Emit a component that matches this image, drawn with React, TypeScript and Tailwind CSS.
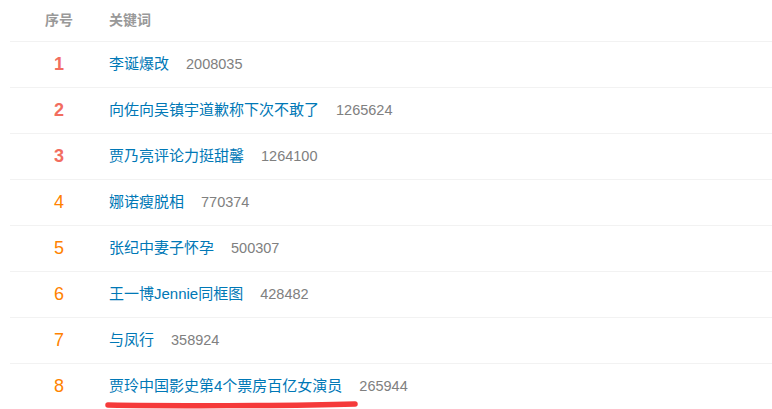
const rows = [
  { rank: 1, word: '李诞爆改', count: '2008035' },
  { rank: 2, word: '向佐向吴镇宇道歉称下次不敢了', count: '1265624' },
  { rank: 3, word: '贾乃亮评论力挺甜馨', count: '1264100' },
  { rank: 4, word: '娜诺瘦脱相', count: '770374' },
  { rank: 5, word: '张纪中妻子怀孕', count: '500307' },
  { rank: 6, word: '王一博Jennie同框图', count: '428482' },
  { rank: 7, word: '与凤行', count: '358924' },
  { rank: 8, word: '贾玲中国影史第4个票房百亿女演员', count: '265944', marked: true },
]

export default function App() {
  return (
    <div className="w-[772px] h-[409px] overflow-hidden bg-white font-['Liberation_Sans','Noto_Sans_CJK_SC',sans-serif]">
      <div className="ml-[10px]">
        <div className="flex items-center h-[41px] text-[14px] font-bold text-[#999]">
          <div className="w-[98px] text-center">序号</div>
          <div className="pl-px">关键词</div>
        </div>
        {rows.map(r => (
          <div key={r.rank} className="flex items-center h-[46px] border-t border-[#f2f2f2]">
            <div className={`w-[98px] text-center text-[18px] ${r.rank <= 3 ? 'font-bold text-[#f26d5f]' : 'text-[#ff8200]'}`}>
              {r.rank}
            </div>
            <div className="relative pl-px text-[15px] text-[#0078b6]">
              {r.word}
              {r.marked ? (
                <svg className="absolute left-[-3px] top-[24px]" width="254" height="12" viewBox="0 0 254 12">
                  <path d="M3 6 C 60 7, 180 7, 250 5" fill="none" stroke="#f53a3a" strokeWidth="5.5" strokeLinecap="round" />
                </svg>
              ) : null}
            </div>
            <div className="ml-[17px] text-[14.5px] text-[#808080]">{r.count}</div>
          </div>
        ))}
      </div>
    </div>
  )
}
